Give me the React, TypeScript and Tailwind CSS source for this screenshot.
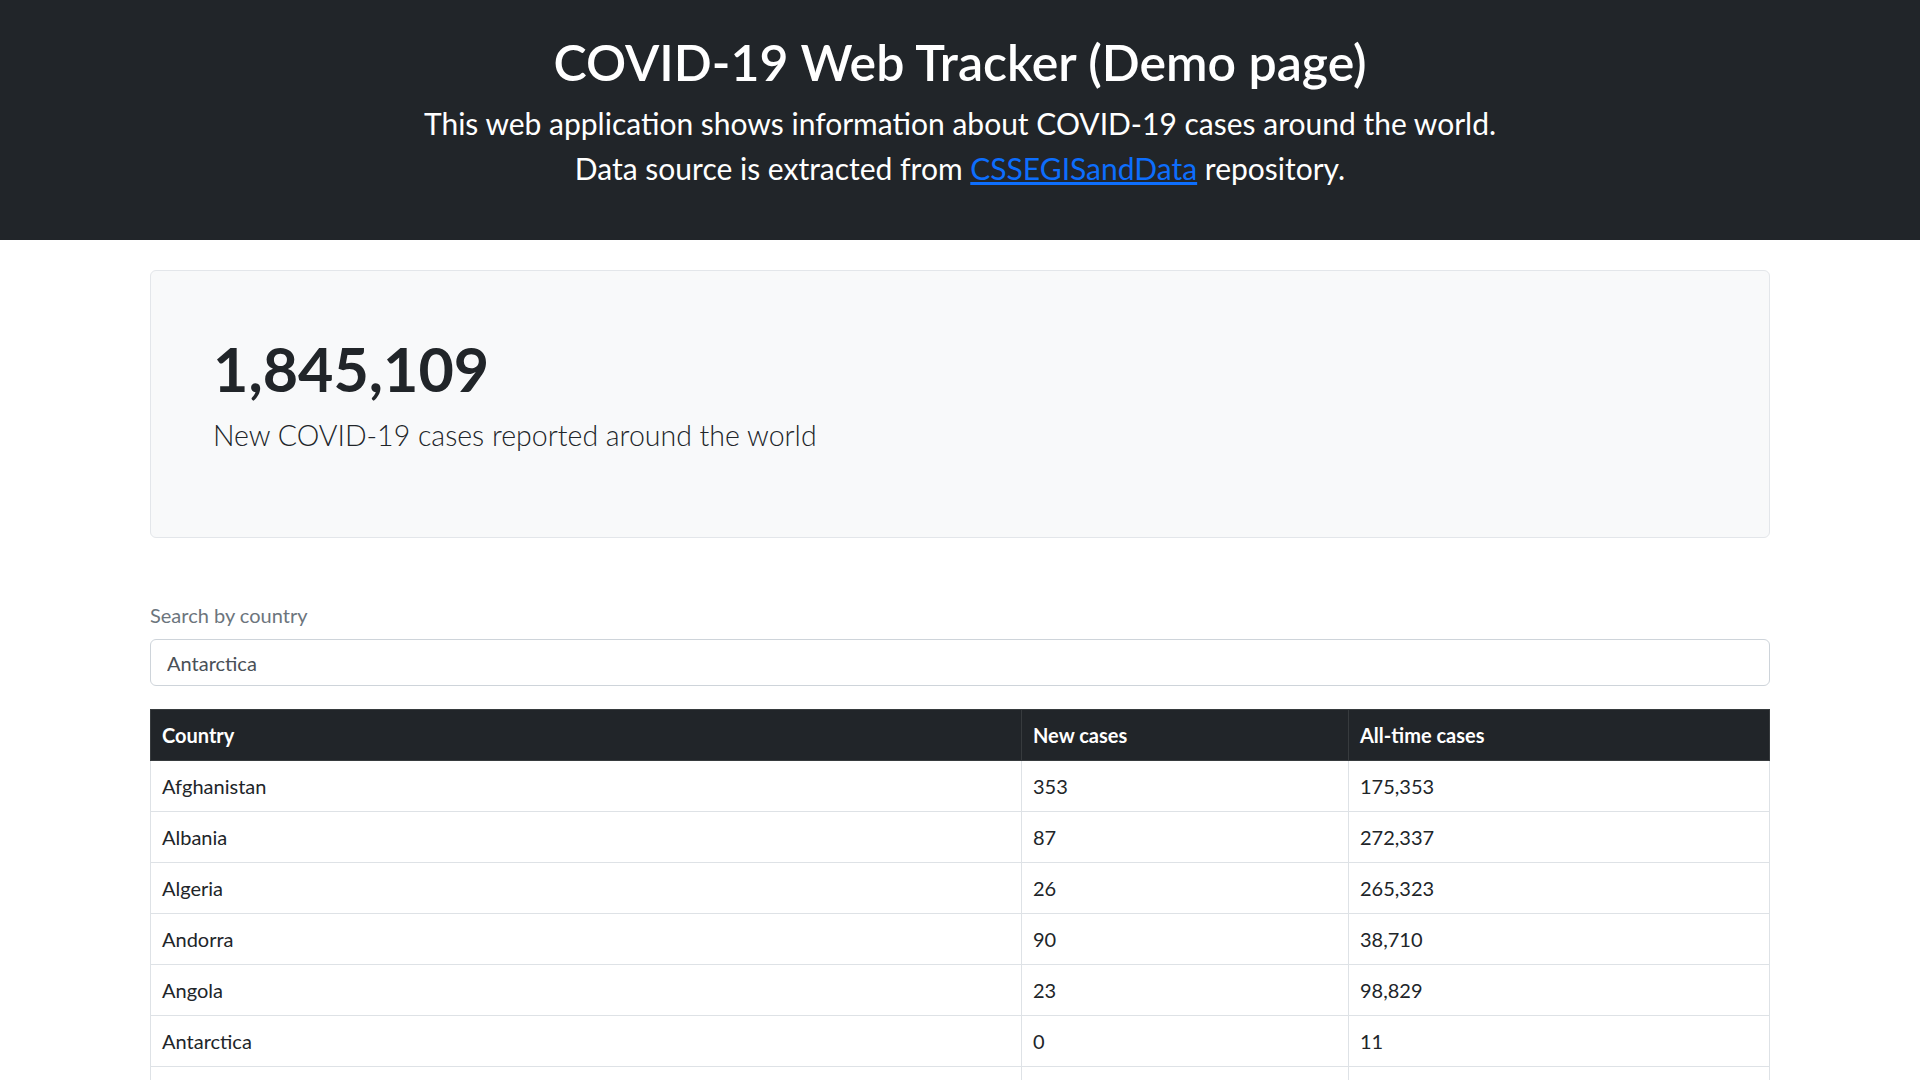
const rows: [string, string, string][] = [
  ["Afghanistan", "353", "175,353"],
  ["Albania", "87", "272,337"],
  ["Algeria", "26", "265,323"],
  ["Andorra", "90", "38,710"],
  ["Angola", "23", "98,829"],
  ["Antarctica", "0", "11"],
  ["Antigua and Barbuda", "0", "8,773"],
  ["Argentina", "1,292", "9,961,386"],
];

export default function App() {
  return (
    <div className="min-h-screen bg-white text-[#212529] font-['Lato','Liberation_Sans',sans-serif]">
      {/* Header */}
      <header className="bg-[#212529] text-white text-center h-[240px] pt-[32px]">
        <h1 className="text-[50px] leading-[60px] font-semibold">COVID-19 Web Tracker (Demo page)</h1>
        <p className="text-[30px] leading-[45px] mt-[9px]">
          This web application shows information about COVID-19 cases around the world.
          <br />
          Data source is extracted from{" "}
          <a href="#" className="text-[#0d6efd] underline">
            CSSEGISandData
          </a>{" "}
          repository.
        </p>
      </header>

      <main className="mx-[150px] pt-[30px]">
        {/* Summary box */}
        <section className="h-[268px] bg-[#f8f9fa] border border-[#e3e6ea] rounded-[6px] pl-[62px] pt-[61px]">
          <div className="text-[61px] leading-[1.2] font-bold">1,845,109</div>
          <p className="text-[28.5px] font-light mt-[9px]">New COVID-19 cases reported around the world</p>
        </section>

        {/* Search */}
        <div className="mt-[62px]">
          <label className="block text-[20px] text-[#6c757d] leading-[30px]">Search by country</label>
          <input
            className="mt-[9px] w-full h-[47px] border border-[#ced4da] rounded-[6px] px-[16px] text-[20px] text-[#495057] outline-none"
            defaultValue="Antarctica"
          />
        </div>

        {/* Table */}
        <table className="w-full mt-[23px] border-collapse text-[20px]">
          <thead>
            <tr className="bg-[#212529] text-white h-[51px]">
              <th className="text-left font-bold px-[11px] border border-[#373b3e] w-[871px]">Country</th>
              <th className="text-left font-bold px-[11px] border border-[#373b3e] w-[327px]">New cases</th>
              <th className="text-left font-bold px-[11px] border border-[#373b3e]">All-time cases</th>
            </tr>
          </thead>
          <tbody>
            {rows.map(([country, fresh, total]) => (
              <tr key={country} className="h-[51px]">
                <td className="px-[11px] border border-[#dee2e6]">{country}</td>
                <td className="px-[11px] border border-[#dee2e6]">{fresh}</td>
                <td className="px-[11px] border border-[#dee2e6]">{total}</td>
              </tr>
            ))}
          </tbody>
        </table>
      </main>
    </div>
  );
}
